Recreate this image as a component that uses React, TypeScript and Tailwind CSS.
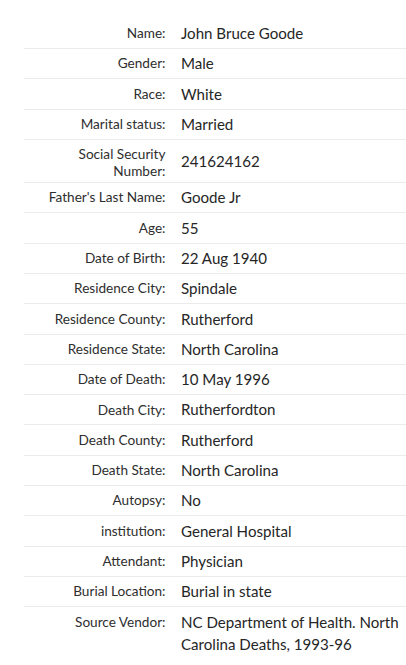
import React from "react";

const rows: { label: string; value: string }[] = [
  { label: "Name:", value: "John Bruce Goode" },
  { label: "Gender:", value: "Male" },
  { label: "Race:", value: "White" },
  { label: "Marital status:", value: "Married" },
  { label: "Social Security Number:", value: "241624162" },
  { label: "Father's Last Name:", value: "Goode Jr" },
  { label: "Age:", value: "55" },
  { label: "Date of Birth:", value: "22 Aug 1940" },
  { label: "Residence City:", value: "Spindale" },
  { label: "Residence County:", value: "Rutherford" },
  { label: "Residence State:", value: "North Carolina" },
  { label: "Date of Death:", value: "10 May 1996" },
  { label: "Death City:", value: "Rutherfordton" },
  { label: "Death County:", value: "Rutherford" },
  { label: "Death State:", value: "North Carolina" },
  { label: "Autopsy:", value: "No" },
  { label: "institution:", value: "General Hospital" },
  { label: "Attendant:", value: "Physician" },
  { label: "Burial Location:", value: "Burial in state" },
  { label: "Source Vendor:", value: "NC Department of Health. North Carolina Deaths, 1993-96" },
];

export default function App() {
  return (
    <div
      className="w-[406px] min-h-[665px] bg-white text-[#333] pt-[18.7px] pl-6"
      style={{ fontFamily: "Lato, 'Open Sans', sans-serif" }}
    >
      {rows.map((r, i) => (
        <div
          key={i}
          className={
            "flex " + (i < rows.length - 1 ? "border-b border-[#ebebeb]" : "")
          }
        >
          <div className="w-[141.5px] shrink-0 self-start pl-[14px] text-right text-[13.6px] leading-[16.7px] pt-[6.4px] pb-[2.4px] text-[#2e2e2e]">
            {r.label}
          </div>
          <div className="self-center pl-[15.5px] py-[3.3px] text-[15.1px] leading-[22.7px] text-[#262626] min-w-0 flex-1">
            {r.value}
          </div>
        </div>
      ))}
    </div>
  );
}
